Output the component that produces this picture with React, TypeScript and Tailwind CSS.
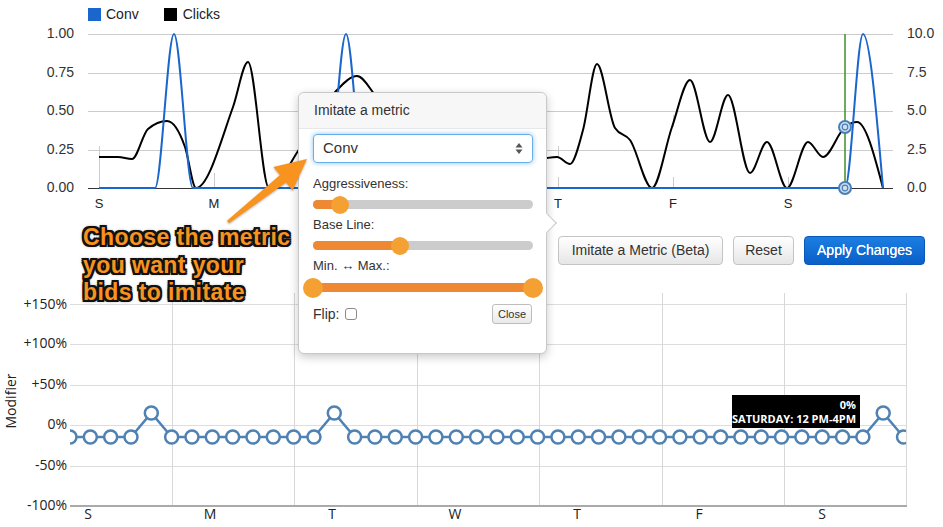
import type { ReactNode } from "react";

type Pt = [number, number];

// monotone cubic (same idea as d3 curveMonotoneX)
function monotonePath(pts: Pt[]): string {
    const n = pts.length;
    const s: number[] = [];
    for (let i = 0; i < n - 1; i++) {
        s.push((pts[i + 1][1] - pts[i][1]) / (pts[i + 1][0] - pts[i][0]));
    }
    const t: number[] = new Array(n).fill(0);
    for (let i = 1; i < n - 1; i++) {
        const h0 = pts[i][0] - pts[i - 1][0];
        const h1 = pts[i + 1][0] - pts[i][0];
        const s0 = s[i - 1];
        const s1 = s[i];
        const p = (s0 * h1 + s1 * h0) / (h0 + h1);
        t[i] = (Math.sign(s0) + Math.sign(s1)) * Math.min(Math.abs(s0), Math.abs(s1), 0.5 * Math.abs(p)) || 0;
    }
    t[0] = (3 * s[0] - t[1]) / 2;
    t[n - 1] = (3 * s[n - 2] - t[n - 2]) / 2;
    let d = `M${pts[0][0]},${pts[0][1]}`;
    for (let i = 0; i < n - 1; i++) {
        const [x0, y0] = pts[i];
        const [x1, y1] = pts[i + 1];
        const dx = (x1 - x0) / 3;
        d += ` C${x0 + dx},${y0 + dx * t[i]} ${x1 - dx},${y1 - dx * t[i + 1]} ${x1},${y1}`;
    }
    return d;
}

const clicks: Pt[] = [
    [99, 157], [118, 157], [132, 159], [148, 129], [167, 121], [185, 147], [196, 188],
    [233, 107], [248, 62], [269, 188], [300, 148], [337, 90], [357, 76], [375, 95],
    [420, 170], [480, 150], [520, 165], [547, 158], [557, 157], [570, 164], [583, 130],
    [597, 64], [615, 128], [630, 140], [652, 188], [672, 127], [690, 80], [710, 142],
    [728, 95], [750, 173], [767, 142], [787, 188], [808, 142], [823, 157], [845, 127],
    [857, 122], [883, 188],
];

const conv: Pt[] = [
    [99, 188], [155, 188], [174, 34], [193, 188], [327, 188], [346, 34], [365, 188],
    [845, 188], [863, 34], [883, 188],
];

const peaks = [4, 13, 40];
const modifier: Pt[] = Array.from({ length: 42 }, (_, i) => [70 + i * 20.33, peaks.includes(i) ? 413 : 437]);

function TopChart() {
    const ys = [34, 73, 111, 150, 188];
    const left = ["1.00", "0.75", "0.50", "0.25", "0.00"];
    const right = ["10.0", "7.5", "5.0", "2.5", "0.0"];
    const days: Array<[string, number]> = [["S", 99], ["M", 214], ["T", 329], ["W", 444], ["T", 558], ["F", 673], ["S", 788]];
    return (
        <svg width={943} height={193} viewBox="0 22 943 193" className="block font-['Liberation_Sans',Arial,sans-serif]">
            {ys.slice(0, 4).map((y) => (
                <line key={y} x1={88} x2={893} y1={y + 0.5} y2={y + 0.5} stroke="#cccccc" />
            ))}
            <line x1={99.5} x2={99.5} y1={146} y2={188} stroke="#cccccc" />
            <line x1={214.5} x2={214.5} y1={173} y2={188} stroke="#cccccc" />
            <line x1={558.5} x2={558.5} y1={146} y2={158} stroke="#cccccc" />
            <line x1={558.5} x2={558.5} y1={177} y2={188} stroke="#cccccc" />
            <line x1={673.5} x2={673.5} y1={115} y2={127} stroke="#cccccc" />
            <line x1={673.5} x2={673.5} y1={177} y2={188} stroke="#cccccc" />
            <line x1={788.5} x2={788.5} y1={177} y2={188} stroke="#cccccc" />
            <path d={monotonePath(clicks)} fill="none" stroke="#000" strokeWidth={2} />
            <line x1={88} x2={893} y1={188.5} y2={188.5} stroke="#333333" />
            <path d={monotonePath(conv)} fill="none" stroke="#1a66cc" strokeWidth={2} />
            <line x1={845} x2={845} y1={34} y2={188} stroke="#3f8f2a" strokeWidth={1.5} />
            {[127, 188].map((y) => (
                <g key={y}>
                    <circle cx={845} cy={y} r={6} fill="#cfe0f3" stroke="#4a7fb5" strokeWidth={2} />
                    <circle cx={845} cy={y} r={2.8} fill="none" stroke="#4a7fb5" strokeWidth={1.2} />
                </g>
            ))}
            {ys.map((y, i) => (
                <text key={`l${y}`} x={74} y={y} textAnchor="end" dominantBaseline="middle" fontSize={14} fill="#333">
                    {left[i]}
                </text>
            ))}
            {ys.map((y, i) => (
                <text key={`r${y}`} x={907} y={y} dominantBaseline="middle" fontSize={14} fill="#333">
                    {right[i]}
                </text>
            ))}
            {days.map(([d, x], i) => (
                <text key={i} x={x} y={205} textAnchor="middle" dominantBaseline="middle" fontSize={13} fill="#222">
                    {d}
                </text>
            ))}
        </svg>
    );
}

function BottomChart() {
    const ys = [304, 344, 385, 425, 466];
    const labels = ["+150%", "+100%", "+50%", "0%", "-50%", "-100%"];
    const labelY = [305, 344, 385, 425, 466, 506];
    const vx = [172, 294, 417, 539, 662, 784, 906];
    const days: Array<[string, number]> = [["S", 88], ["M", 210], ["T", 332], ["W", 455], ["T", 577], ["F", 699], ["S", 822]];
    const line = modifier.map(([x, y], i) => `${i ? "L" : "M"}${x},${y}`).join(" ");
    return (
        <svg width={943} height={237} viewBox="0 290 943 237" className="block font-['Open_Sans',sans-serif]">
            <defs>
                <clipPath id="plot">
                    <rect x={70} y={290} width={836} height={216} />
                </clipPath>
            </defs>
            {ys.map((y) => (
                <line key={y} x1={70} x2={906} y1={y + 0.5} y2={y + 0.5} stroke="#dddddd" />
            ))}
            {vx.map((x) => (
                <line key={x} x1={x + 0.5} x2={x + 0.5} y1={293} y2={506} stroke="#d8d8d8" />
            ))}
            <line x1={70} x2={907} y1={506} y2={506} stroke="#aaaaaa" strokeWidth={2} />
            <g clipPath="url(#plot)">
                <path d={line} fill="none" stroke="#4f82b3" strokeWidth={2.5} />
                {modifier.map(([x, y], i) => (
                    <circle key={i} cx={x} cy={y} r={6.5} fill="#fff" stroke="#4f82b3" strokeWidth={2.5} />
                ))}
            </g>
            {labels.map((l, i) => (
                <text key={l} x={67} y={labelY[i]} textAnchor="end" dominantBaseline="middle" fontSize={14} fill="#222">
                    {l}
                </text>
            ))}
            <text x={12} y={401} textAnchor="middle" dominantBaseline="middle" fontSize={14} fill="#222" transform="rotate(-90 12 401)">
                Modifier
            </text>
            {days.map(([d, x], i) => (
                <text key={i} x={x} y={515} textAnchor="middle" dominantBaseline="middle" fontSize={14} fill="#222">
                    {d}
                </text>
            ))}
        </svg>
    );
}

function Slider({ fill, thumbs, big = false }: { fill: number; thumbs: number[]; big?: boolean }) {
    const size = big ? "w-[20px] h-[20px] -mt-[10px] -ml-[10px]" : "w-[18px] h-[18px] -mt-[9px] -ml-[9px]";
    return (
        <div className="relative h-[9px] w-[220px] rounded-full bg-[#cccccc]">
            <div className="h-full rounded-full bg-[#ef8833]" style={{ width: fill }} />
            {thumbs.map((x) => (
                <div key={x} className={`absolute top-1/2 rounded-full bg-[#f4a033] ${size}`} style={{ left: x }} />
            ))}
        </div>
    );
}

function Btn({ children, primary = false, w }: { children: ReactNode; primary?: boolean; w: string }) {
    const cls = primary
        ? "bg-gradient-to-b from-[#1c7ee3] to-[#0a5fc9] border-[#0a57b8] text-white [text-shadow:0_0_0.4px_#fff]"
        : "bg-gradient-to-b from-white to-[#e6e6e6] border-[#c4c4c4] text-[#333]";
    return (
        <button type="button" className={`h-[29px] rounded-[4px] border text-[14px] ${cls} ${w}`}>
            {children}
        </button>
    );
}

function Popup() {
    return (
        <div className="absolute left-[298px] top-[92px] w-[249px] h-[262px] rounded-[6px] border border-[#c8c8c8] bg-white shadow-[0_3px_10px_rgba(0,0,0,0.22)] font-['Liberation_Sans',Arial,sans-serif] text-[#333]">
            <div className="absolute left-[241px] top-[123px] w-[14px] h-[14px] rotate-45 bg-white border-t border-r border-[#c8c8c8]" />
            <div className="relative flex h-[36px] items-center rounded-t-[6px] border-b border-[#e8e8e8] bg-[#f7f7f7] px-[15px] text-[14px]">
                Imitate a metric
            </div>
            <div className="relative flex flex-col px-[14px] pt-[5px]">
                <div className="flex h-[29px] w-[220px] items-center justify-between rounded-[4px] border border-[#66afe9] px-[9px] text-[15px] shadow-[0_0_5px_rgba(102,175,233,0.75)]">
                    <span>Conv</span>
                    <svg width="8" height="13" viewBox="0 0 8 13">
                        <path d="M4 1 L7.5 5.5 H0.5 Z M4 12 L7.5 7.5 H0.5 Z" fill="#555" />
                    </svg>
                </div>
                <div className="mt-[13px] h-[16px] text-[13px] leading-[16px]">Aggressiveness:</div>
                <div className="mt-[8px] mb-[5px]">
                    <Slider fill={28} thumbs={[27]} />
                </div>
                <div className="mt-[3px] h-[16px] text-[13px] leading-[16px]">Base Line:</div>
                <div className="mt-[8px] mb-[5px]">
                    <Slider fill={88} thumbs={[87]} />
                </div>
                <div className="mt-[3px] h-[16px] text-[13px] leading-[16px]">Min. ↔ Max.:</div>
                <div className="mt-[9px] mb-[5px]">
                    <Slider fill={220} thumbs={[0, 220]} big />
                </div>
                <div className="mt-[7px] flex h-[20px] items-center">
                    <span className="text-[14px]">Flip:</span>
                    <span className="ml-[6px] h-[12px] w-[12px] rounded-[3px] border border-[#8a8a8a] bg-white" />
                    <button type="button" className="ml-auto h-[20px] w-[40px] rounded-[3px] border border-[#bdbdbd] bg-gradient-to-b from-white to-[#e9e9e9] text-[11px] text-[#333]">
                        Close
                    </button>
                </div>
            </div>
        </div>
    );
}

export default function App() {
    return (
        <div className="relative h-[527px] w-[943px] overflow-hidden bg-white">
            <div className="flex h-[22px] items-center gap-[25px] pl-[88px] pt-[6px] font-['Liberation_Sans',Arial,sans-serif] text-[14px] text-[#222]">
                <div className="flex items-center gap-[5px]">
                    <span className="h-[13px] w-[13px] bg-[#1a66cc]" />
                    Conv
                </div>
                <div className="flex items-center gap-[6px]">
                    <span className="h-[13px] w-[13px] bg-black" />
                    Clicks
                </div>
            </div>
            <TopChart />
            <div className="flex h-[75px] justify-between">
                <div className="relative z-10 pl-[83px] pt-[9px] font-['Liberation_Sans',Arial,sans-serif] text-[23px] font-bold leading-[27.5px] tracking-[0.4px] text-[#f7931e] [text-shadow:2px_0_0_#111,-2px_0_0_#111,0_2px_0_#111,0_-2px_0_#111,2px_2px_0_#111,-2px_-2px_0_#111,2px_-2px_0_#111,-2px_2px_0_#111,0_0_4px_#000]">
                    <div>Choose the metric</div>
                    <div>you want your</div>
                    <div>bids to imitate</div>
                </div>
                <div className="flex items-start gap-[10px] pr-[18px] pt-[21px] font-['Liberation_Sans',Arial,sans-serif]">
                    <Btn w="w-[165px]">Imitate a Metric (Beta)</Btn>
                    <Btn w="w-[61px]">Reset</Btn>
                    <Btn w="w-[121px]" primary>
                        Apply Changes
                    </Btn>
                </div>
            </div>
            <BottomChart />

            <div className="absolute left-[732px] top-[395px] flex h-[33px] w-[128px] flex-col items-end justify-center bg-black pr-[4px] font-['Open_Sans',sans-serif] text-[11px] font-bold leading-[14px] text-white">
                <div>0%</div>
                <div>SATURDAY: 12 PM-4PM</div>
            </div>

            <Popup />

            <svg className="pointer-events-none absolute left-0 top-0" width={943} height={527}>
                <polygon
                    points="227,220.8 280,175.1 273.4,167 307,159 292.6,190.6 286,182.5 229,223.2"
                    fill="#f7931e"
                    style={{ filter: "drop-shadow(0 1px 1px rgba(0,0,0,0.3))" }}
                />
            </svg>
        </div>
    );
}
